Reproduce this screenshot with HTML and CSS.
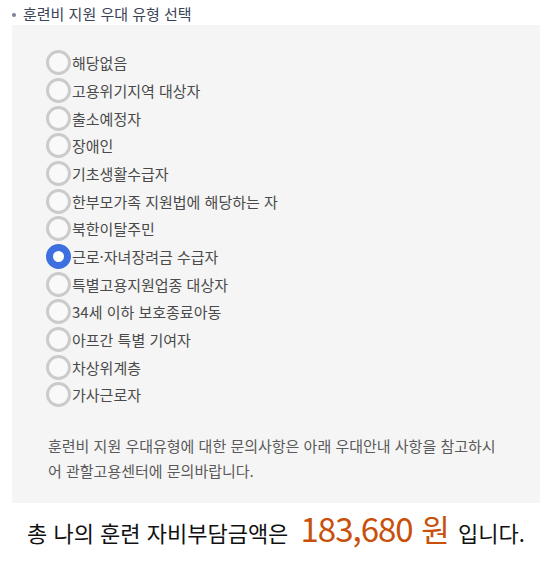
FILE: index.html
```html
<!DOCTYPE html>
<html lang="ko">
<head>
    <meta charset="UTF-8">
    <title>훈련비 지원 우대 유형 선택</title>
    <link rel="stylesheet" href="styles.css">
</head>
<body>

<div class="support-type">
    <h3 class="section-title">훈련비 지원 우대 유형 선택</h3>
    <div class="option-box">
        <ul class="option-list">
            <li><label><input type="radio" name="supportType" value="0"><span>해당없음</span></label></li>
            <li><label><input type="radio" name="supportType" value="1"><span>고용위기지역 대상자</span></label></li>
            <li><label><input type="radio" name="supportType" value="2"><span>출소예정자</span></label></li>
            <li><label><input type="radio" name="supportType" value="3"><span>장애인</span></label></li>
            <li><label><input type="radio" name="supportType" value="4"><span>기초생활수급자</span></label></li>
            <li><label><input type="radio" name="supportType" value="5"><span>한부모가족 지원법에 해당하는 자</span></label></li>
            <li><label><input type="radio" name="supportType" value="6"><span>북한이탈주민</span></label></li>
            <li><label><input type="radio" name="supportType" value="7" checked><span>근로·자녀장려금 수급자</span></label></li>
            <li><label><input type="radio" name="supportType" value="8"><span>특별고용지원업종 대상자</span></label></li>
            <li><label><input type="radio" name="supportType" value="9"><span>34세 이하 보호종료아동</span></label></li>
            <li><label><input type="radio" name="supportType" value="10"><span>아프간 특별 기여자</span></label></li>
            <li><label><input type="radio" name="supportType" value="11"><span>차상위계층</span></label></li>
            <li><label><input type="radio" name="supportType" value="12"><span>가사근로자</span></label></li>
        </ul>
        <p class="option-note">훈련비 지원 우대유형에 대한 문의사항은 아래 우대안내 사항을 참고하시어 관할고용센터에 문의바랍니다.</p>
    </div>
    <p class="total">총 나의 훈련 자비부담금액은 <strong class="amount"><span class="num">183,680</span> 원</strong> 입니다.</p>
</div>

</body>
</html>
```

FILE: styles.css
```css
body {
    margin: 0;
    padding: 0 20px 0 12px;
    font-family: "Noto Sans CJK KR", "Noto Sans", sans-serif;
    background: white;
    color: #333;
}
.section-title {
    margin: 0;
    padding: 3px 0 0 11px;
    height: 22px;
    font-size: 15px;
    font-weight: normal;
    line-height: 22px;
    color: #3a4358;
    position: relative;
}
.section-title::before {
    content: "";
    position: absolute;
    left: 0;
    top: 13px;
    width: 4px;
    height: 4px;
    border-radius: 50%;
    background: #7a8296;
}
.option-box {
    background: #f5f5f5;
    padding: 24px 20px 20px 34px;
}
.option-list {
    list-style: none;
    margin: 0;
    padding: 0;
}
.option-list li {
    height: 27.67px;
}
.option-list label {
    display: flex;
    align-items: center;
    height: 100%;
    font-size: 15px;
    color: #4a4a4a;
    cursor: pointer;
}
.option-list input {
    appearance: none;
    margin: 0;
    width: 25px;
    height: 25px;
    border: 3px solid #cbcbcb;
    border-radius: 50%;
    background: #f9f9f9;
    box-sizing: border-box;
}
.option-list input:checked {
    border: 7px solid #3d6fe0;
    background: white;
}
.option-list span {
    margin-left: 1px;
}
.option-note {
    margin: 24px 0 0 0;
    padding: 0 22px 0 2px;
    font-size: 15px;
    line-height: 25px;
    color: #5a5a5a;
}
.total {
    margin: 5px 0 0 15px;
    font-size: 22px;
    line-height: 40px;
    color: #111;
    white-space: nowrap;
}
.amount {
    font-size: 31px;
    font-weight: normal;
    color: #c8500a;
    margin: 0 2px 0 6px;
}
.num {
    font-size: 33px;
    letter-spacing: -1px;
}
```
